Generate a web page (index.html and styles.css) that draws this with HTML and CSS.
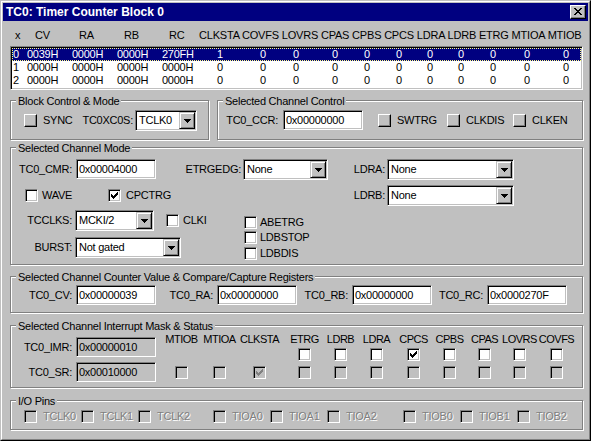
FILE: index.html
```html
<!DOCTYPE html>
<html>
<head>
<meta charset="utf-8">
<title>TC0: Timer Counter Block 0</title>
<link rel="stylesheet" href="styles.css">
</head>
<body>
<div class="window"><div class="frame">
  <div class="titlebar">
    <span class="title">TC0: Timer Counter Block 0</span>
    <span class="close"><svg width="8" height="7" viewBox="0 0 8 7"><path d="M0 0h2v1H0zM6 0h2v1H6zM1 1h2v1H1zM5 1h2v1H5zM2 2h4v1H2zM3 3h2v1H3zM2 4h4v1H2zM1 5h2v1H1zM5 5h2v1H5zM0 6h2v1H0zM6 6h2v1H6z" fill="#000"/></svg></span>
  </div>
  <div class="client">
    <div class="lv-head">
      <span>x</span><span>CV</span><span>RA</span><span>RB</span><span>RC</span><span class="lv-flags">CLKSTA COVFS LOVRS CPAS CPBS CPCS LDRA LDRB ETRG MTIOA MTIOB</span>
    </div>
    <div class="listbox">
      <div class="lv-row sel"><span>0</span><span>0039H</span><span>0000H</span><span>0000H</span><span>270FH</span><span>1</span><span>0</span><span>0</span><span>0</span><span>0</span><span>0</span><span>0</span><span>0</span><span>0</span><span>0</span><span>0</span></div>
      <div class="lv-row"><span>1</span><span>0000H</span><span>0000H</span><span>0000H</span><span>0000H</span><span>0</span><span>0</span><span>0</span><span>0</span><span>0</span><span>0</span><span>0</span><span>0</span><span>0</span><span>0</span><span>0</span></div>
      <div class="lv-row"><span>2</span><span>0000H</span><span>0000H</span><span>0000H</span><span>0000H</span><span>0</span><span>0</span><span>0</span><span>0</span><span>0</span><span>0</span><span>0</span><span>0</span><span>0</span><span>0</span><span>0</span></div>
    </div>

    <div class="top-groups">
      <div class="group g-block">
        <div class="legend">Block Control &amp; Mode</div>
        <div class="row r-block">
          <span class="box raised"></span><span class="cl w-sync">SYNC</span>
          <span class="lab w-xc0s">TC0XC0S:</span>
          <span class="combo w-tclk"><span class="val">TCLK0</span><span class="drop"><svg width="7" height="4" viewBox="0 0 7 4"><path d="M0 0h7v1H0zM1 1h5v1H1zM2 2h3v1H2zM3 3h1v1H3z"/></svg></span></span>
        </div>
      </div>
      <div class="group g-ccr">
        <div class="legend">Selected Channel Control</div>
        <div class="row r-ccr">
          <span class="lab w-ccr">TC0_CCR:</span>
          <span class="edit">0x00000000</span>
          <span class="box raised m-swtrg"></span><span class="cl w-swtrg">SWTRG</span>
          <span class="box raised"></span><span class="cl w-clkdis">CLKDIS</span>
          <span class="box raised"></span><span class="cl">CLKEN</span>
        </div>
      </div>
    </div>

    <div class="group g-mode">
      <div class="legend">Selected Channel Mode</div>
      <div class="row r-a">
        <span class="lab w-61">TC0_CMR:</span>
        <span class="edit">0x00004000</span>
        <span class="lab w-etrg">ETRGEDG:</span>
        <span class="combo w-etrgc"><span class="val">None</span><span class="drop"><svg width="7" height="4" viewBox="0 0 7 4"><path d="M0 0h7v1H0zM1 1h5v1H1zM2 2h3v1H2zM3 3h1v1H3z"/></svg></span></span>
        <span class="lab w-ldr">LDRA:</span>
        <span class="combo w-ldrc"><span class="val">None</span><span class="drop"><svg width="7" height="4" viewBox="0 0 7 4"><path d="M0 0h7v1H0zM1 1h5v1H1zM2 2h3v1H2zM3 3h1v1H3z"/></svg></span></span>
      </div>
      <div class="row r-b">
        <span class="box m-wave"></span><span class="cl g4 w-wave">WAVE</span>
        <span class="box"><svg width="7" height="7" viewBox="0 0 7 7"><path d="M0 2h1v3H0zM1 3h1v3H1zM2 4h1v3H2zM3 3h1v3H3zM4 2h1v3H4zM5 1h1v3H5zM6 0h1v3H6z"/></svg></span><span class="cl g5 w-cpctrg">CPCTRG</span>
        <span class="lab w-ldr">LDRB:</span>
        <span class="combo w-ldrc"><span class="val">None</span><span class="drop"><svg width="7" height="4" viewBox="0 0 7 4"><path d="M0 0h7v1H0zM1 1h5v1H1zM2 2h3v1H2zM3 3h1v1H3z"/></svg></span></span>
      </div>
      <div class="lower">
        <div class="lower-left">
          <div class="row">
            <span class="lab w-61 mr3">TCCLKS:</span>
            <span class="combo w-tcclks"><span class="val">MCKI/2</span><span class="drop"><svg width="7" height="4" viewBox="0 0 7 4"><path d="M0 0h7v1H0zM1 1h5v1H1zM2 2h3v1H2zM3 3h1v1H3z"/></svg></span></span>
            <span class="box m-clki"></span><span class="cl g4">CLKI</span>
          </div>
          <div class="row r-burst">
            <span class="lab w-61 mr3">BURST:</span>
            <span class="combo w-burst"><span class="val">Not gated</span><span class="drop"><svg width="7" height="4" viewBox="0 0 7 4"><path d="M0 0h7v1H0zM1 1h5v1H1zM2 2h3v1H2zM3 3h1v1H3z"/></svg></span></span>
          </div>
        </div>
        <div class="lower-right">
          <div class="crow"><span class="box"></span><span class="cl g3">ABETRG</span></div>
          <div class="crow"><span class="box"></span><span class="cl g3">LDBSTOP</span></div>
          <div class="crow"><span class="box"></span><span class="cl g3">LDBDIS</span></div>
        </div>
      </div>
    </div>

    <div class="group g-counter">
      <div class="legend">Selected Channel Counter Value &amp; Compare/Capture Registers</div>
      <div class="row r-counter">
        <span class="lab w-61">TC0_CV:</span>
        <span class="edit">0x00000039</span>
        <span class="lab w-57">TC0_RA:</span>
        <span class="edit">0x00000000</span>
        <span class="lab w-51">TC0_RB:</span>
        <span class="edit">0x00000000</span>
        <span class="lab w-51">TC0_RC:</span>
        <span class="edit">0x0000270F</span>
      </div>
    </div>

    <div class="group g-int">
      <div class="legend">Selected Channel Interrupt Mask &amp; Status</div>
      <div class="int-body">
        <div class="int-left">
          <div class="row r-imr">
            <span class="lab w-61">TC0_IMR:</span>
            <span class="edit dis">0x00000010</span>
          </div>
          <div class="row r-sr">
            <span class="lab w-61">TC0_SR:</span>
            <span class="edit dis">0x00010000</span>
          </div>
        </div>
        <div class="flags">
          <span class="fh">MTIOB</span><span class="fh">MTIOA</span><span class="fh">CLKSTA</span><span class="fh">ETRG</span><span class="fh">LDRB</span><span class="fh">LDRA</span><span class="fh">CPCS</span><span class="fh">CPBS</span><span class="fh">CPAS</span><span class="fh">LOVRS</span><span class="fh">COVFS</span>

          <span class="fc r1"></span><span class="fc r1"></span><span class="fc r1"></span>
          <span class="fc r1"><span class="box"></span></span>
          <span class="fc r1"><span class="box"></span></span>
          <span class="fc r1"><span class="box"></span></span>
          <span class="fc r1"><span class="box"><svg width="7" height="7" viewBox="0 0 7 7"><path d="M0 2h1v3H0zM1 3h1v3H1zM2 4h1v3H2zM3 3h1v3H3zM4 2h1v3H4zM5 1h1v3H5zM6 0h1v3H6z"/></svg></span></span>
          <span class="fc r1"><span class="box"></span></span>
          <span class="fc r1"><span class="box"></span></span>
          <span class="fc r1"><span class="box"></span></span>
          <span class="fc r1"><span class="box"></span></span>

          <span class="fc r2"><span class="box dis"></span></span>
          <span class="fc r2"><span class="box dis"></span></span>
          <span class="fc r2"><span class="box dis"><svg width="7" height="7" viewBox="0 0 7 7"><path fill="#808080" d="M0 2h1v3H0zM1 3h1v3H1zM2 4h1v3H2zM3 3h1v3H3zM4 2h1v3H4zM5 1h1v3H5zM6 0h1v3H6z"/></svg></span></span>
          <span class="fc r2"><span class="box dis"></span></span>
          <span class="fc r2"><span class="box dis"></span></span>
          <span class="fc r2"><span class="box dis"></span></span>
          <span class="fc r2"><span class="box dis"></span></span>
          <span class="fc r2"><span class="box dis"></span></span>
          <span class="fc r2"><span class="box dis"></span></span>
          <span class="fc r2"><span class="box dis"></span></span>
          <span class="fc r2"><span class="box dis"></span></span>
        </div>
      </div>
    </div>

    <div class="group g-io">
      <div class="legend">I/O Pins</div>
      <div class="row r-io">
        <span class="io"><span class="box dis"></span><span class="cl g6 off">TCLK0</span></span>
        <span class="io"><span class="box dis"></span><span class="cl g6 off">TCLK1</span></span>
        <span class="io"><span class="box dis"></span><span class="cl g6 off">TCLK2</span></span>
        <span class="io sep"><span class="box dis"></span><span class="cl g6 off">TIOA0</span></span>
        <span class="io"><span class="box dis"></span><span class="cl g6 off">TIOA1</span></span>
        <span class="io"><span class="box dis"></span><span class="cl g6 off">TIOA2</span></span>
        <span class="io sep2"><span class="box dis"></span><span class="cl g6 off">TIOB0</span></span>
        <span class="io"><span class="box dis"></span><span class="cl g6 off">TIOB1</span></span>
        <span class="io"><span class="box dis"></span><span class="cl g6 off">TIOB2</span></span>
      </div>
    </div>
  </div>
</div></div>
</body>
</html>
```

FILE: styles.css
```css
* { box-sizing: border-box; }
html, body { margin: 0; padding: 0; }
body {
  background: #c0c0c0;
  font-family: "Liberation Sans", Arial, sans-serif;
  font-size: 11px;
  line-height: 13px;
  letter-spacing: -0.25px;
  color: #000;
}
svg { display: block; }

/* window frame */
.window {
  width: 591px; height: 441px;
  border: 1px solid; border-color: #c0c0c0 #000 #000 #c0c0c0;
}
.frame {
  height: 100%;
  border: 1px solid; border-color: #fff #808080 #808080 #fff;
  padding: 1px;
}
.titlebar {
  height: 18px; background: #000080;
  display: flex; align-items: center;
  padding: 0 2px 0 3px;
}
.title {
  flex: 1; color: #fff; font-weight: bold;
  font-size: 12px; line-height: 18px; white-space: nowrap;
  letter-spacing: 0;
}
.close {
  width: 16px; height: 14px; background: #c0c0c0;
  border: 1px solid; border-color: #fff #000 #000 #fff;
  box-shadow: inset -1px -1px #808080;
  display: flex; align-items: center; justify-content: center;
}
.close svg { margin: 0 1px 1px 0; }

.client { padding: 8px 0 0 7px; }

/* list view */
.lv-head {
  display: grid;
  grid-template-columns: 20px 44px 45px 45px 30px auto;
  padding-left: 5px; height: 13px; white-space: nowrap;
}
.lv-flags { letter-spacing: -0.2px; word-spacing: 0; }
.listbox {
  margin-top: 4px; width: 573px; height: 44px; background: #fff;
  border: 1px solid; border-color: #808080 #fff #fff #808080;
  box-shadow: inset 1px 1px #000, inset -1px -1px #c0c0c0;
  padding: 1px;
}
.lv-row {
  display: grid;
  grid-template-columns: 14px 45px 45px 45px 55px 43px 33px 39px 32px 32px 31px 31px 32px 34px 39px auto;
  height: 13px; padding-left: 1px; white-space: nowrap;
}
.lv-row.sel {
  background: #000080; color: #fff;
  outline: 1px dotted #ffff80; outline-offset: -1px;
}

/* group boxes */
.group {
  border: 1px solid #808080;
  box-shadow: inset 1px 1px #fff, 1px 1px #fff;
  width: 573px;
}
.legend {
  width: max-content; height: 13px;
  margin: -6px 0 0 5px; padding: 0 2px;
  background: #c0c0c0; white-space: nowrap;
}
.top-groups { display: flex; margin-top: 10px; }
.g-block { width: 199px; height: 40px; }
.g-ccr { width: 366px; height: 40px; margin-left: 8px; }
.g-mode { height: 118px; margin-top: 7px; }
.g-counter { height: 37px; margin-top: 11px; }
.g-int { height: 63px; margin-top: 12px; }
.g-io { height: 30px; margin-top: 12px; }

.row { display: flex; align-items: flex-start; height: 21px; white-space: nowrap; }
.row > .box, .row > .cl { align-self: center; }

.lab { display: flex; justify-content: flex-end; line-height: 20px; margin-right: 4px; }
.mr3 { margin-right: 3px; }
.w-61 { width: 61px; }
.w-57 { width: 57px; }
.w-51 { width: 51px; }

/* edit */
.edit {
  width: 80px; height: 20px; background: #fff;
  border: 1px solid; border-color: #808080 #fff #fff #808080;
  box-shadow: inset 1px 1px #000, inset -1px -1px #c0c0c0;
  padding: 1px 1px 1px 2px; line-height: 16px;
}
.edit.dis { background: #c0c0c0; }

/* combo */
.combo {
  display: flex; height: 21px; background: #fff;
  border: 1px solid; border-color: #808080 #fff #fff #808080;
  box-shadow: inset 1px 1px #000, inset -1px -1px #c0c0c0;
  padding: 1px;
}
.combo .val { flex: 1; padding-left: 2px; line-height: 17px; }
.drop {
  width: 16px; height: 17px; background: #c0c0c0;
  border: 1px solid; border-color: #c0c0c0 #000 #000 #c0c0c0;
  box-shadow: inset 1px 1px #fff, inset -1px -1px #808080;
  display: flex; align-items: center; justify-content: center;
}
.drop svg { margin-top: 1px; }

/* checkbox */
.box {
  width: 13px; height: 13px; flex: none; background: #fff;
  border: 1px solid; border-color: #808080 #fff #fff #808080;
  box-shadow: inset 1px 1px #000, inset -1px -1px #c0c0c0;
  padding: 2px;
}
.box.dis { background: #c0c0c0; }
.box.raised {
  background: #c0c0c0;
  border-color: #fff #000 #000 #fff;
  box-shadow: inset -1px -1px #808080;
}
.cl { margin-left: 6px; }
.cl.g3 { margin-left: 3px; }
.cl.g4 { margin-left: 4px; }
.cl.g5 { margin-left: 5px; }
.cl.g6 { margin-left: 6px; }
.off { color: #808080; text-shadow: 1px 1px 0 #fff; }

/* block control */
.r-block { margin-top: 2px; padding-left: 13px; }
.w-sync { width: 40px; }
.w-xc0s { width: 50px; margin-right: 2px; }
.w-tclk { width: 62px; }

/* channel control */
.r-ccr { margin-top: 2px; }
.w-ccr { width: 60px; margin-right: 5px; }
.m-swtrg { margin-left: 15px; }
.w-swtrg { width: 50px; }
.w-clkdis { width: 47px; }

/* channel mode */
.r-a { margin-top: 4px; }
.w-etrg { width: 85px; margin-right: 2px; }
.w-etrgc { width: 85px; }
.w-ldr { width: 57px; margin-right: 2px; }
.w-ldrc { width: 127px; }
.r-b { margin-top: 5px; }
.m-wave { margin-left: 14px; }
.w-wave { width: 66px; }
.w-cpctrg { width: 202px; }
.lower { display: flex; margin-top: 4px; }
.lower-left { width: 233px; }
.w-tcclks { width: 79px; }
.m-clki { margin-left: 12px; }
.r-burst { margin-top: 6px; }
.w-burst { width: 106px; }
.lower-right { margin-top: 6px; }
.crow { display: flex; align-items: center; height: 13px; margin-bottom: 2px; }
.crow:nth-child(2) { margin-bottom: 3px; }

/* counter */
.r-counter { margin-top: 1px; }

/* interrupt */
.int-body { display: flex; }
.int-left { width: 151px; }
.r-imr { margin-top: 4px; height: 20px; }
.r-sr { margin-top: 5px; height: 20px; }
.flags {
  display: grid;
  grid-template-columns: 39px 37px 43px 47px 25px 47px 27px 45px 25px 45px 29px;
  grid-template-rows: 13px 13px 13px;
}
.fh, .fc { display: flex; justify-content: center; white-space: nowrap; }
.fh { letter-spacing: -0.5px; }
.fc.r1 { margin-top: 2px; }
.fc.r2 { margin-top: 7px; }

/* io */
.r-io { margin-top: 2px; padding-left: 13px; height: 13px; align-items: center; }
.io { display: flex; align-items: center; width: 57px; }
.io.sep { margin-left: 18px; }
.io.sep2 { margin-left: 19px; }
```
